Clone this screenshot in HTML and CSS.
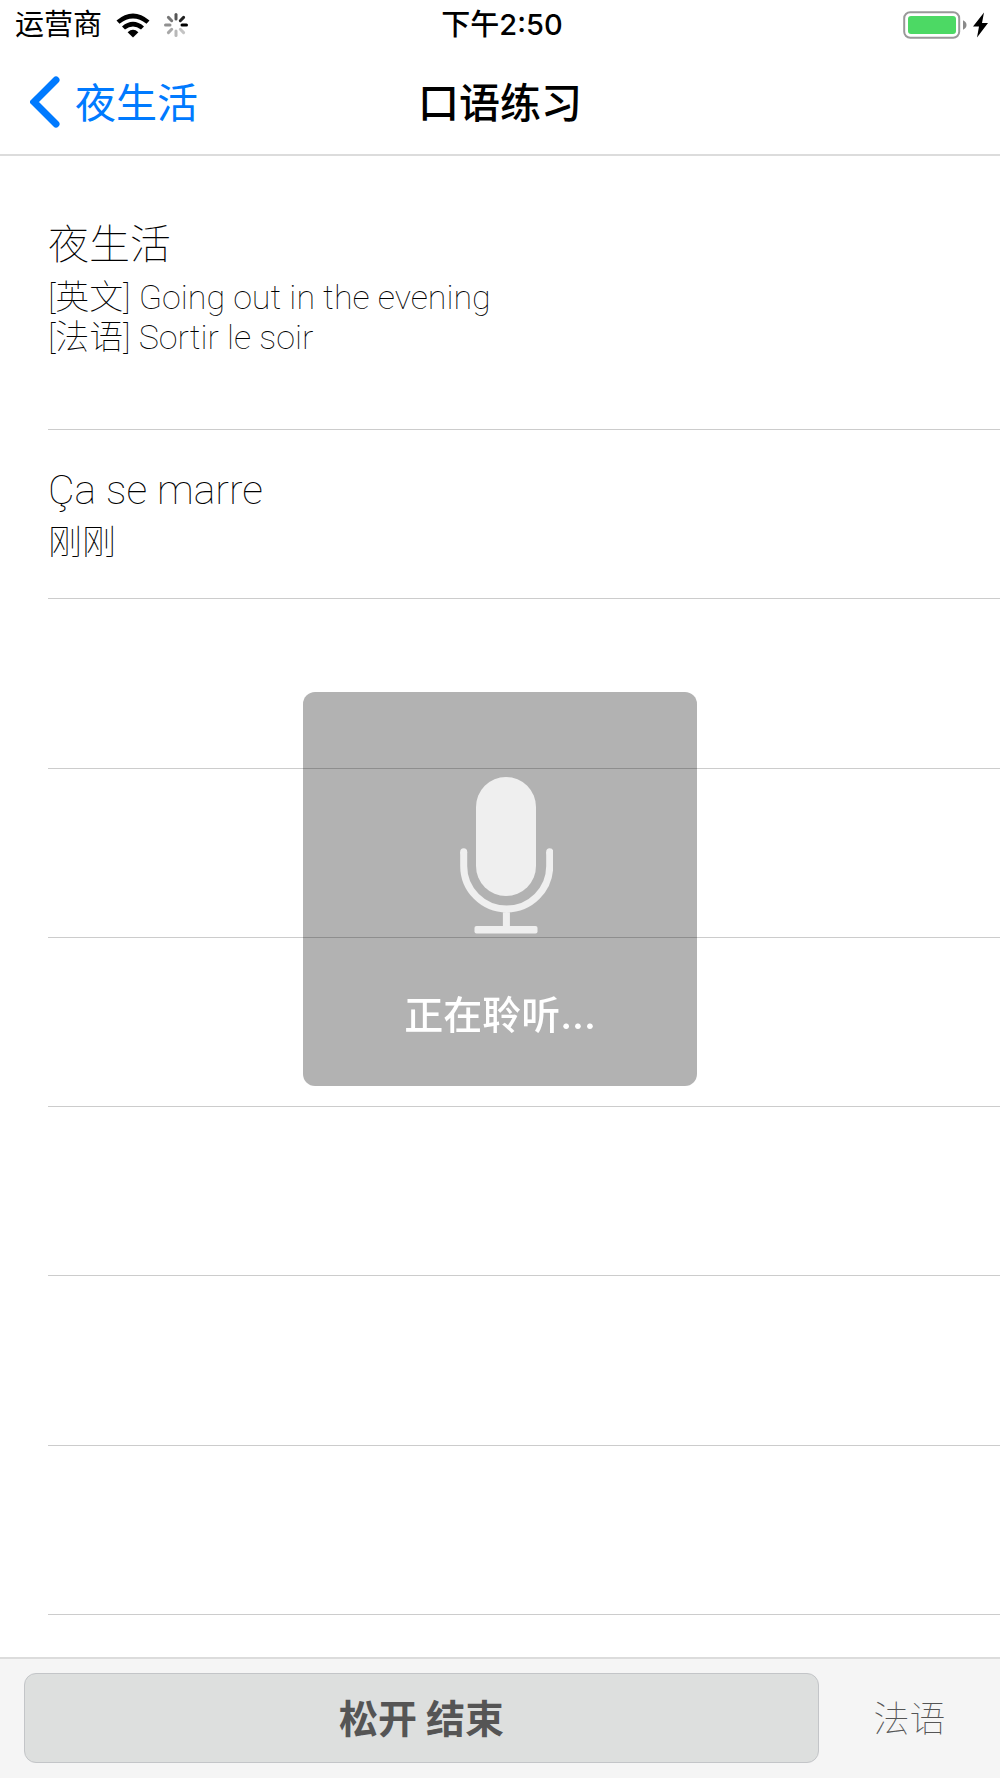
FILE: index.html
```html
<!DOCTYPE html>
<html lang="zh-CN">
  <head>
    <meta charset="UTF-8" />
    <meta name="viewport" content="width=device-width, initial-scale=1.0" />
    <title>口语练习</title>
    <link rel="stylesheet" href="styles.css">
  </head>
  <body>
    <!-- 状态栏 -->
    <div class="status">
      <div class="carrier">
        <span>运营商</span>
        <svg class="wifi" viewBox="0 0 34 25" width="34" height="25">
          <path d="M0.5 7.5Q17 -6.5 33.5 7.5L30.5 10.8Q17 0 3.5 10.8Z" />
          <path d="M6 13.4Q17 4.2 28 13.4L25 16.6Q17 10.2 9 16.6Z" />
          <path d="M11.6 19.2Q17 14.4 22.4 19.2L17 24.5Z" />
        </svg>
        <svg class="loading" viewBox="-12 -12 24 24" width="24" height="24">
          <path d="M0 -6V-10.5" stroke="#555" />
          <path d="M4.3 -4.3L7.6 -7.6" stroke="#222" />
          <path d="M6 0H10.5" stroke="#000" />
          <path d="M4.3 4.3L7.6 7.6" stroke="#c4c4c4" />
          <path d="M0 6V10.5" stroke="#b8b8b8" />
          <path d="M-4.3 4.3L-7.6 7.6" stroke="#a8a8a8" />
          <path d="M-6 0H-10.5" stroke="#909090" />
          <path d="M-4.3 -4.3L-7.6 -7.6" stroke="#777" />
        </svg>
      </div>
      <span class="time">下午2:50</span>
      <svg class="battery" viewBox="0 0 86 28" width="86" height="28">
        <rect x="1.2" y="1.2" width="55" height="25.6" rx="6" fill="none" stroke="#999" stroke-width="2" />
        <rect x="5" y="5" width="48" height="18" rx="3" fill="#4cd964" />
        <path d="M60 9.3Q63.5 11 63.5 14T60 18.7Z" fill="#8a8a8a" />
        <path d="M81 1.5L70 15.5H76L74 26.5L85 12H79Z" />
      </svg>
    </div>

    <!-- 导航栏 -->
    <header class="nav">
      <a class="back" href="#">
        <svg viewBox="0 0 30 52" width="30" height="52">
          <path d="M26 4L4 26L26 48" />
        </svg>
        <span>夜生活</span>
      </a>
      <h1>口语练习</h1>
    </header>

    <!-- 练习列表 -->
    <main class="content">
      <section class="topic">
        <h2>夜生活</h2>
        <p>[英文] Going out in the evening</p>
        <p>[法语] Sortir le soir</p>
      </section>
      <ul class="list">
        <li>
          <h2>Ça se marre</h2>
          <p>刚刚</p>
        </li>
        <li></li>
        <li></li>
        <li></li>
        <li></li>
        <li></li>
        <li></li>
      </ul>
    </main>

    <!-- 底部操作 -->
    <footer class="bar">
      <button class="record">松开 结束</button>
      <button class="lang">法语</button>
    </footer>

    <!-- 录音提示 -->
    <div class="hud">
      <svg viewBox="0 0 106 157" width="106" height="157">
        <rect x="29" y="0" width="60" height="119" rx="30" fill="#efefef" />
        <path d="M16.7 75V89A43 43 0 0 0 102.7 89V75M59.4 132V152" />
        <path d="M16.7 75V74.8M102.7 75V74.8" stroke-linecap="round" />
        <rect x="27.5" y="149" width="63" height="7.5" rx="2" fill="#efefef" />
      </svg>
      <span>正在聆听...</span>
    </div>
  </body>
</html>
```
FILE: styles.css
```css
* {
  margin: 0;
  padding: 0;
  box-sizing: border-box;
}
body {
  min-height: 100vh;
  display: flex;
  flex-direction: column;
  background-color: #fff;
  color: #000;
  font-family: Inter, "Noto Sans CJK SC", sans-serif;
}
button {
  border: none;
  outline: none;
  background-color: transparent;
  font-family: inherit;
  cursor: pointer;
}

.status {
  height: 50px;
  padding: 0 11px 0 15px;
  display: grid;
  grid-template-columns: 1fr auto 1fr;
  align-items: center;
  font-size: 29px;
  line-height: 50px;
}
.carrier {
  display: flex;
  align-items: center;
  gap: 14px;
}
.loading {
  stroke-width: 3;
  stroke-linecap: round;
}
.time {
  font-weight: 500;
}
.battery {
  justify-self: end;
}

.nav {
  height: 106px;
  padding: 0 30px 4px;
  display: grid;
  grid-template-columns: 1fr auto 1fr;
  align-items: center;
  border-bottom: 2px solid #dcdcdc;
  font-size: 41px;
}
.nav h1 {
  font-size: 41px;
  font-weight: 500;
}
.back {
  display: flex;
  align-items: center;
  gap: 15px;
  color: #007aff;
  text-decoration: none;
}
.back svg {
  margin-top: 4px;
}
.back path {
  fill: none;
  stroke: #007aff;
  stroke-width: 7;
  stroke-linecap: round;
}

.content {
  flex: 1;
  display: flex;
  flex-direction: column;
  padding: 0 0 42px 48px;
  font-family: Roboto, "Noto Sans CJK SC", sans-serif;
  font-weight: 100;
}
.content h2 {
  margin-bottom: 4px;
  font-size: 41px;
  font-weight: 100;
  line-height: 56px;
}
.content p {
  font-size: 34px;
  line-height: 40px;
}
.topic {
  height: 274px;
  padding-top: 61px;
  border-bottom: 1px solid #ccc;
}
.list {
  flex: 1;
  display: flex;
  flex-direction: column;
  list-style: none;
}
.list li {
  flex: 1 0 0;
  min-height: 100px;
  padding-bottom: 4px;
  display: flex;
  flex-direction: column;
  justify-content: center;
  border-bottom: 1px solid #ccc;
}

.bar {
  height: 121px;
  padding: 14px 0 0 24px;
  display: flex;
  border-top: 2px solid #dcdcdc;
  background-color: #f5f5f5;
}
.record,
.lang {
  height: 90px;
  padding-bottom: 4px;
  color: #555;
}
.record {
  flex: 1;
  border: 1px solid #c3c5c8;
  border-radius: 12px;
  background-color: #dddfde;
  font-size: 39px;
  font-weight: 700;
}
.lang {
  width: 181px;
  font-size: 36px;
  font-weight: 100;
}

.hud {
  position: fixed;
  top: 50%;
  left: 50%;
  transform: translate(-50%, -50%);
  width: 394px;
  height: 394px;
  padding-top: 85px;
  display: flex;
  flex-direction: column;
  align-items: center;
  gap: 53px;
  border-radius: 12px;
  background-color: rgba(0, 0, 0, 0.3);
  color: #fff;
  font-size: 39px;
  font-weight: 500;
  line-height: 56px;
}
.hud path {
  fill: none;
  stroke: #efefef;
  stroke-width: 7;
}
```
